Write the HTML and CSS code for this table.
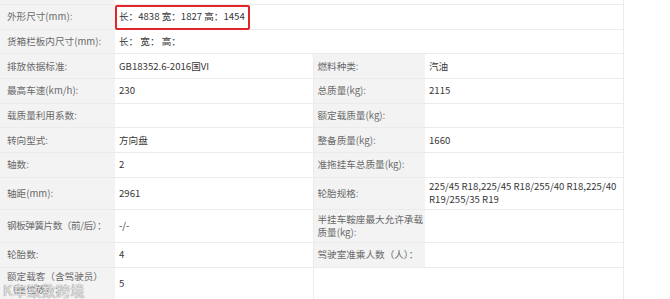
FILE: index.html
```html
<!DOCTYPE html>
<html lang="zh-CN">
<head>
<meta charset="utf-8">
<title>参数</title>
<link rel="stylesheet" href="styles.css">
</head>
<body>
<div class="wrap">
<table class="spec">
  <colgroup>
    <col class="c1"><col class="c2"><col class="c3"><col class="c4">
  </colgroup>
  <tr class="strip"><td class="lab"></td><td colspan="3" class="val"></td></tr>
  <tr><td class="lab">外形尺寸(mm):</td><td colspan="3" class="val hl"><span class="mark"></span>长：4838 宽：1827 高：1454</td></tr>
  <tr><td class="lab">货箱栏板内尺寸(mm):</td><td colspan="3" class="val">长： 宽： 高：</td></tr>
  <tr><td class="lab">排放依据标准:</td><td class="val">GB18352.6-2016国VI</td><td class="lab lab2">燃料种类:</td><td class="val">汽油</td></tr>
  <tr><td class="lab">最高车速(km/h):</td><td class="val">230</td><td class="lab lab2">总质量(kg):</td><td class="val">2115</td></tr>
  <tr><td class="lab">载质量利用系数:</td><td class="val"></td><td class="lab lab2">额定载质量(kg):</td><td class="val"></td></tr>
  <tr><td class="lab">转向型式:</td><td class="val">方向盘</td><td class="lab lab2">整备质量(kg):</td><td class="val">1660</td></tr>
  <tr><td class="lab">轴数:</td><td class="val">2</td><td class="lab lab2">准拖挂车总质量(kg):</td><td class="val"></td></tr>
  <tr class="tire"><td class="lab">轴距(mm):</td><td class="val">2961</td><td class="lab lab2">轮胎规格:</td><td class="val">225/45 R18,225/45 R18/255/40 R18,225/40 R19/255/35 R19</td></tr>
  <tr class="tall"><td class="lab nowrap">钢板弹簧片数（前/后）：</td><td class="val">-/-</td><td class="lab lab2">半挂车鞍座最大允许承载质量(kg):</td><td class="val"></td></tr>
  <tr><td class="lab">轮胎数:</td><td class="val">4</td><td class="lab lab2">驾驶室准乘人数（人）：</td><td class="val"></td></tr>
  <tr class="last"><td class="lab">额定载客（含驾驶员）（座位数）:</td><td class="val">5</td><td colspan="2" class="val"></td></tr>
</table>
<div class="wm">K车致数跨境</div>
</div>
</body>
</html>
```
FILE: styles.css
```css
html, body {
  margin: 0;
  padding: 0;
  background: #ffffff;
}
body {
  font-family: "Noto Sans CJK SC", "Noto Sans", sans-serif;
  font-size: 9.6px;
}
.wrap {
  position: relative;
  width: 670px;
  height: 299px;
  overflow: hidden;
}
.spec {
  border-collapse: collapse;
  table-layout: fixed;
  width: 623px;
}
.c1 { width: 115px; }
.c2 { width: 198px; }
.c3 { width: 112px; }
.c4 { width: 198px; }
.spec tr { height: 24.7px; }
.spec tr.strip { height: 4px; }
.spec tr.strip td { padding: 0; height: 4px; border-top: 0; }
.spec tr.tire { height: 32px; }
.spec tr.tall { height: 33px; }
.spec tr.last { height: 32px; }
.spec td {
  border-top: 1px solid #ebebeb;
  border-bottom: 1px solid #ebebeb;
  padding: 2px 4px;
  line-height: 13px;
  vertical-align: middle;
  word-wrap: break-word;
}
.lab {
  background: #f3f3f3;
  color: #6a6a6a;
  padding-left: 7px !important;
  padding-right: 7px !important;
}
.lab2 {
  padding-left: 4px !important;
  padding-right: 0 !important;
}
.nowrap {
  white-space: nowrap;
  letter-spacing: -0.45px;
  padding-right: 0 !important;
}
.val {
  background: #ffffff;
  color: #383838;
  border-right: 1px solid #ebebeb;
}
.hl { position: relative; }
.mark {
  position: absolute;
  left: 0;
  top: 0;
  width: 135px;
  height: 25px;
  box-sizing: border-box;
  border: 2px solid #e0262b;
  border-radius: 2px;
}
.wm {
  position: absolute;
  left: 3px;
  top: 282px;
  font-size: 14px;
  line-height: 16px;
  color: rgba(255, 255, 255, 0.75);
  text-shadow: 0 0 1px #8a8a8a, 0 0 1px #8a8a8a;
  letter-spacing: 0.5px;
}
```
